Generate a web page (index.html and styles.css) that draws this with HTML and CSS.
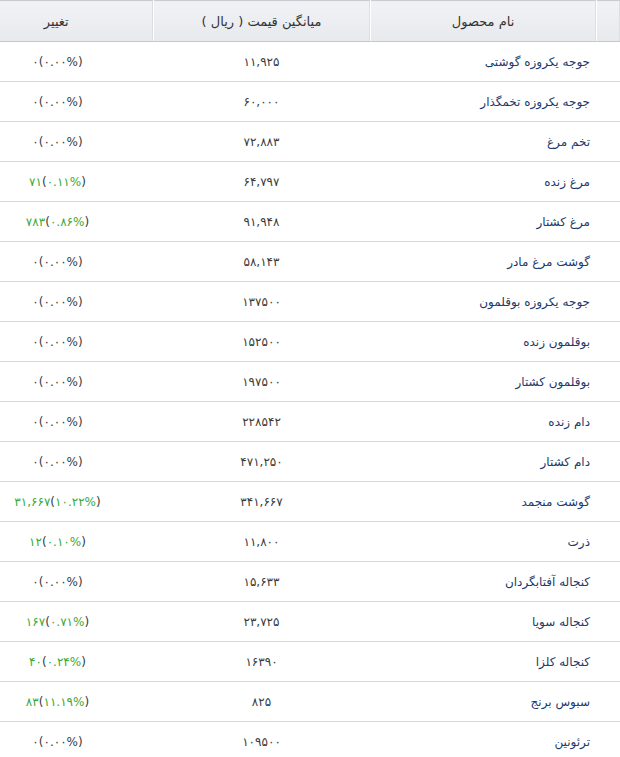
FILE: index.html
```html
<!DOCTYPE html>
<html lang="fa" dir="rtl">
<head>
<meta charset="utf-8">
<title>قیمت محصولات</title>
<link rel="stylesheet" href="styles.css">
</head>
<body>
<table class="prices">
  <colgroup>
    <col class="c-pad">
    <col class="c-name">
    <col class="c-price">
    <col class="c-change">
  </colgroup>
  <thead>
    <tr>
      <th class="pad"></th>
      <th>نام محصول</th>
      <th>میانگین قیمت ( ریال )</th>
      <th class="last">تغییر</th>
    </tr>
  </thead>
  <tbody>
    <tr><td></td><td class="name">جوجه یکروزه گوشتی</td><td class="price">۱۱,۹۲۵</td><td class="chg"><span>۰</span>(<span>۰.۰۰%</span>)</td></tr>
    <tr><td></td><td class="name">جوجه یکروزه تخمگذار</td><td class="price">۶۰,۰۰۰</td><td class="chg"><span>۰</span>(<span>۰.۰۰%</span>)</td></tr>
    <tr><td></td><td class="name">تخم مرغ</td><td class="price">۷۲,۸۸۳</td><td class="chg"><span>۰</span>(<span>۰.۰۰%</span>)</td></tr>
    <tr><td></td><td class="name">مرغ زنده</td><td class="price">۶۴,۷۹۷</td><td class="chg"><span class="up">۷۱</span>(<span class="up">۰.۱۱%</span>)</td></tr>
    <tr><td></td><td class="name">مرغ کشتار</td><td class="price">۹۱,۹۴۸</td><td class="chg"><span class="up">۷۸۳</span>(<span class="up">۰.۸۶%</span>)</td></tr>
    <tr><td></td><td class="name">گوشت مرغ مادر</td><td class="price">۵۸,۱۴۳</td><td class="chg"><span>۰</span>(<span>۰.۰۰%</span>)</td></tr>
    <tr><td></td><td class="name">جوجه یکروزه بوقلمون</td><td class="price">۱۳۷۵۰۰</td><td class="chg"><span>۰</span>(<span>۰.۰۰%</span>)</td></tr>
    <tr><td></td><td class="name">بوقلمون زنده</td><td class="price">۱۵۲۵۰۰</td><td class="chg"><span>۰</span>(<span>۰.۰۰%</span>)</td></tr>
    <tr><td></td><td class="name">بوقلمون کشتار</td><td class="price">۱۹۷۵۰۰</td><td class="chg"><span>۰</span>(<span>۰.۰۰%</span>)</td></tr>
    <tr><td></td><td class="name">دام زنده</td><td class="price">۲۲۸۵۴۲</td><td class="chg"><span>۰</span>(<span>۰.۰۰%</span>)</td></tr>
    <tr><td></td><td class="name">دام کشتار</td><td class="price">۴۷۱,۲۵۰</td><td class="chg"><span>۰</span>(<span>۰.۰۰%</span>)</td></tr>
    <tr><td></td><td class="name">گوشت منجمد</td><td class="price">۳۴۱,۶۶۷</td><td class="chg"><span class="up">۳۱,۶۶۷</span>(<span class="up">۱۰.۲۲%</span>)</td></tr>
    <tr><td></td><td class="name">ذرت</td><td class="price">۱۱,۸۰۰</td><td class="chg"><span class="up">۱۲</span>(<span class="up">۰.۱۰%</span>)</td></tr>
    <tr><td></td><td class="name">کنجاله آفتابگردان</td><td class="price">۱۵,۶۳۳</td><td class="chg"><span>۰</span>(<span>۰.۰۰%</span>)</td></tr>
    <tr><td></td><td class="name">کنجاله سویا</td><td class="price">۲۳,۷۲۵</td><td class="chg"><span class="up">۱۶۷</span>(<span class="up">۰.۷۱%</span>)</td></tr>
    <tr><td></td><td class="name">کنجاله کلزا</td><td class="price">۱۶۳۹۰</td><td class="chg"><span class="up">۴۰</span>(<span class="up">۰.۲۴%</span>)</td></tr>
    <tr><td></td><td class="name">سبوس برنج</td><td class="price">۸۲۵</td><td class="chg"><span class="up">۸۳</span>(<span class="up">۱۱.۱۹%</span>)</td></tr>
    <tr><td></td><td class="name">ترئونین</td><td class="price">۱۰۹۵۰۰</td><td class="chg"><span>۰</span>(<span>۰.۰۰%</span>)</td></tr>
  </tbody>
</table>
</body>
</html>
```
FILE: styles.css
```css
html, body {
  margin: 0;
  padding: 0;
  background: #ffffff;
}
body {
  font-family: "DejaVu Sans", "Noto Sans", sans-serif;
  font-size: 13px;
  color: #333333;
}
.prices {
  width: 620px;
  border-collapse: collapse;
  table-layout: fixed;
}
.c-pad { width: 24px; }
.c-name { width: 226px; }
.c-price { width: 217px; }
.c-change { width: 153px; }

.prices thead th {
  height: 40px;
  padding: 0;
  font-weight: normal;
  color: #333333;
  text-align: center;
  background: linear-gradient(#f1f2f5, #e7e9ed);
  border-top: 1px solid #c9ccd2;
  border-bottom: 1px solid #c8c8c8;
  border-left: 1px solid #ffffff;
  box-shadow: inset -1px 0 0 #dcdee3;
}
.prices thead th.last {
  border-left: none;
  padding-right: 40px;
}
.prices tbody td {
  height: 39px;
  padding: 0;
  border-bottom: 1px solid #d6d6d6;
  text-align: center;
  color: #3a3a3a;
}
.prices tbody td.name {
  text-align: right;
  padding-right: 6px;
  font-size: 12px;
  color: #1d3a6b;
}
.prices tbody td.price {
  font-size: 12px;
  letter-spacing: 0.6px;
}
.prices tbody td.chg {
  direction: ltr;
  font-size: 12px;
  letter-spacing: 0.6px;
  padding-right: 38px;
  color: #3a3a3a;
}
.chg .up {
  color: #3aa935;
}
```
